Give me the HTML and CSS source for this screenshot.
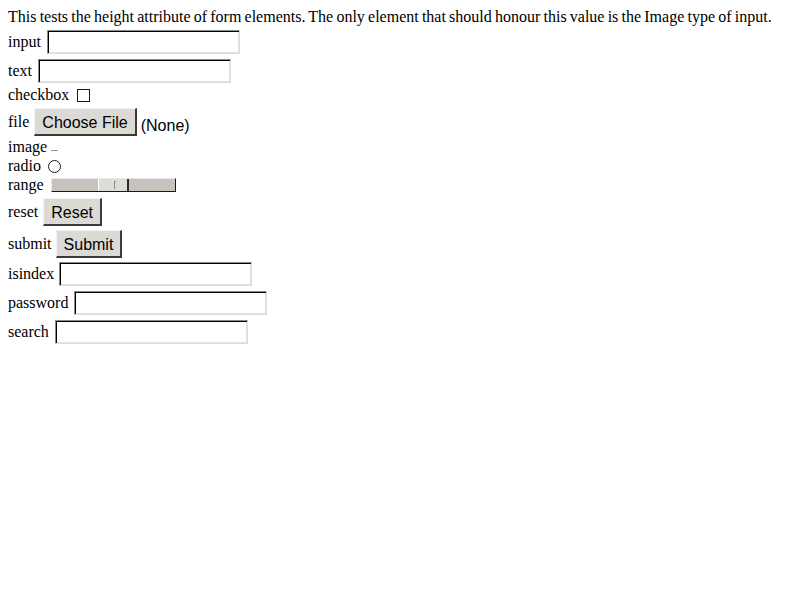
FILE: index.html
```html
<!DOCTYPE html>
<html>
<head>
<meta charset="utf-8">
<title>height attribute of form elements</title>
<link rel="stylesheet" href="styles.css">
</head>
<body>
<div class="page">
  <div class="intro">This tests the height attribute of form elements. The only element that should honour this value is the Image type of input.</div>

  <div class="row r-input"><span class="lbl">input</span><input class="field gap-field" type="text"></div>
  <div class="row r-text"><span class="lbl">text</span><input class="field gap-field" type="text"></div>
  <div class="row r-check"><span class="lbl">checkbox</span><span class="checkbox"></span></div>
  <div class="row r-file"><span class="lbl">file</span><span class="btn gap-btn">Choose File</span><span class="none">(None)</span></div>
  <div class="row r-image"><span class="lbl">image</span><span class="img"></span></div>
  <div class="row r-radio"><span class="lbl">radio</span><span class="radio"></span></div>
  <div class="row r-range"><span class="lbl">range</span>
    <span class="range"><span class="range-left"></span><span class="thumb"><span class="grip"></span></span><span class="range-right"></span></span>
  </div>
  <div class="row r-reset"><span class="lbl">reset</span><span class="btn gap-btn">Reset</span></div>
  <div class="row r-submit"><span class="lbl">submit</span><span class="btn gap-btn-s">Submit</span></div>
  <div class="row r-isindex"><span class="lbl">isindex</span><input class="field gap-field-s" type="text"></div>
  <div class="row r-password"><span class="lbl">password</span><input class="field gap-field" type="password"></div>
  <div class="row r-search"><span class="lbl">search</span><input class="field gap-field" type="text"></div>
</div>
</body>
</html>
```

FILE: styles.css
```css
html, body {
  margin: 0;
  padding: 0;
  background: #ffffff;
}

.page {
  padding: 8px;
  display: flex;
  flex-direction: column;
  font-family: "Liberation Serif", "Times New Roman", serif;
  font-size: 16px;
  line-height: 18px;
  color: #000;
}

.intro {
  height: 18px;
  white-space: nowrap;
  word-spacing: -0.8px;
}

.row {
  display: flex;
  align-items: center;
  white-space: nowrap;
}

.lbl {
  line-height: 18px;
}

.r-input   { margin-top: 4px; height: 24px; }
.r-text    { margin-top: 5px; height: 24px; }
.r-check   { margin-top: 3px; height: 18px; }
.r-file    { margin-top: 4px; height: 28px; }
.r-image   { margin-top: 2px; height: 18px; }
.r-radio   { margin-top: 1px; height: 18px; }
.r-range   { margin-top: 1px; height: 18px; }
.r-reset   { margin-top: 4px; height: 28px; }
.r-submit  { margin-top: 4px; height: 28px; }
.r-isindex { margin-top: 4px; height: 24px; }
.r-password{ margin-top: 5px; height: 24px; }
.r-search  { margin-top: 5px; height: 24px; }

/* text fields */
.field {
  -webkit-appearance: none;
  appearance: none;
  box-sizing: border-box;
  width: 193px;
  height: 24px;
  margin: 0;
  padding: 0;
  background: #ffffff;
  border-style: solid;
  border-width: 1px;
  border-color: #8a8a8a #dcdcdc #dcdcdc #8a8a8a;
  box-shadow: inset 1px 1px 0 #000000, inset -1px -1px 0 #e4e4e4;
  outline: none;
  font-family: "Liberation Sans", Arial, sans-serif;
  font-size: 13px;
}

.gap-field { margin-left: 6px; }
.gap-field-s { margin-left: 5px; }

/* checkbox */
.checkbox {
  box-sizing: border-box;
  width: 13px;
  height: 13px;
  margin-left: 8px;
  border: 1px solid #1a1a1a;
  background: #ffffff;
}

/* radio */
.radio {
  box-sizing: border-box;
  width: 13px;
  height: 13px;
  margin-left: 7px;
  border: 1px solid #1a1a1a;
  border-radius: 50%;
  background: #ffffff;
}

/* buttons */
.btn {
  box-sizing: border-box;
  height: 28px;
  padding: 2px 7px 0 7px;
  display: flex;
  align-items: center;
  background: #dcdad5;
  border-style: solid;
  border-width: 1px 2px 2px 1px;
  border-color: #f4f4f2 #3a3a3a #3a3a3a #f4f4f2;
  font-family: "Liberation Sans", Arial, sans-serif;
  font-size: 16px;
  line-height: 18px;
  color: #000;
}

.gap-btn { margin-left: 5px; }
.gap-btn-s { margin-left: 4px; }

.none {
  margin-left: 4px;
  margin-top: 7px;
  font-family: "Liberation Sans", Arial, sans-serif;
  font-size: 16px;
  line-height: 18px;
}

/* image */
.img {
  width: 7px;
  height: 1px;
  margin-left: 4px;
  margin-top: 7px;
  background: #8c96a8;
}

/* range */
.range {
  box-sizing: border-box;
  display: flex;
  width: 125px;
  height: 14px;
  margin-left: 7px;
  border-bottom: 1px solid #1a1a1a;
  border-right: 1px solid #1a1a1a;
  border-top: 1px solid #e8e8e8;
  border-left: 1px solid #e8e8e8;
  background: #c6c3bc;
}

.range-left {
  width: 46px;
}

.thumb {
  box-sizing: border-box;
  position: relative;
  width: 31px;
  height: 100%;
  background: #dedcd7;
  border-left: 1px solid #ffffff;
  border-right: 2px solid #2a2a2a;
}

.grip {
  position: absolute;
  left: 15px;
  top: 2px;
  width: 2px;
  height: 8px;
  border-left: 1px solid #8a8a8a;
  border-top: 1px solid #8a8a8a;
  border-bottom: 1px solid #bdbdbd;
  box-sizing: border-box;
}

.range-right {
  flex: 1;
}
```
